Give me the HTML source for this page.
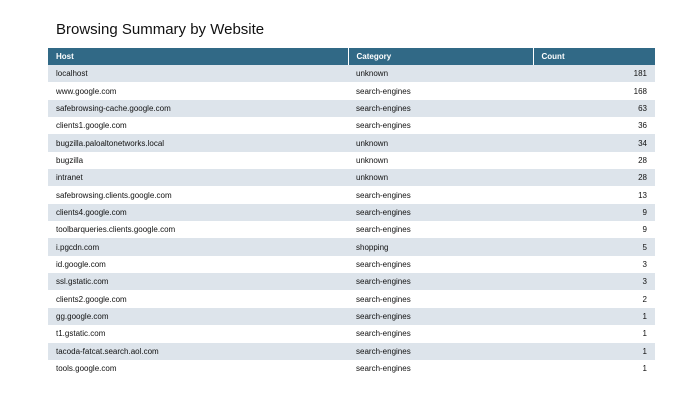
<!DOCTYPE html>
<html><head><style>
body{margin:0;width:674px;height:404px;background:#fff;font-family:"Liberation Sans",Arial,sans-serif;position:relative;overflow:hidden}
h1{position:absolute;left:56px;top:21px;margin:0;font-size:15px;font-weight:normal;color:#111}
table{position:absolute;left:48px;top:48px;width:607px;border-collapse:collapse;font-size:8px;color:#111}
th{background:#316986;color:#fff;text-align:left;height:17px;padding:0 0 0 8px;font-weight:bold;border-left:1px solid #fff}
th:first-child{border-left:none}
td{height:17.35px;padding:0 0 0 8px;white-space:nowrap}
tr:nth-child(odd) td{background:#dde4eb}
td.n{text-align:right;padding-right:8px}
</style></head><body>
<h1>Browsing Summary by Website</h1>
<table>
<colgroup><col style="width:300px"><col style="width:185px"><col style="width:122px"></colgroup>
<thead><tr><th>Host</th><th>Category</th><th>Count</th></tr></thead>
<tbody>
<tr><td>localhost</td><td>unknown</td><td class="n">181</td></tr>
<tr><td>www.google.com</td><td>search-engines</td><td class="n">168</td></tr>
<tr><td>safebrowsing-cache.google.com</td><td>search-engines</td><td class="n">63</td></tr>
<tr><td>clients1.google.com</td><td>search-engines</td><td class="n">36</td></tr>
<tr><td>bugzilla.paloaltonetworks.local</td><td>unknown</td><td class="n">34</td></tr>
<tr><td>bugzilla</td><td>unknown</td><td class="n">28</td></tr>
<tr><td>intranet</td><td>unknown</td><td class="n">28</td></tr>
<tr><td>safebrowsing.clients.google.com</td><td>search-engines</td><td class="n">13</td></tr>
<tr><td>clients4.google.com</td><td>search-engines</td><td class="n">9</td></tr>
<tr><td>toolbarqueries.clients.google.com</td><td>search-engines</td><td class="n">9</td></tr>
<tr><td>i.pgcdn.com</td><td>shopping</td><td class="n">5</td></tr>
<tr><td>id.google.com</td><td>search-engines</td><td class="n">3</td></tr>
<tr><td>ssl.gstatic.com</td><td>search-engines</td><td class="n">3</td></tr>
<tr><td>clients2.google.com</td><td>search-engines</td><td class="n">2</td></tr>
<tr><td>gg.google.com</td><td>search-engines</td><td class="n">1</td></tr>
<tr><td>t1.gstatic.com</td><td>search-engines</td><td class="n">1</td></tr>
<tr><td>tacoda-fatcat.search.aol.com</td><td>search-engines</td><td class="n">1</td></tr>
<tr><td>tools.google.com</td><td>search-engines</td><td class="n">1</td></tr>
</tbody></table>
</body></html>
